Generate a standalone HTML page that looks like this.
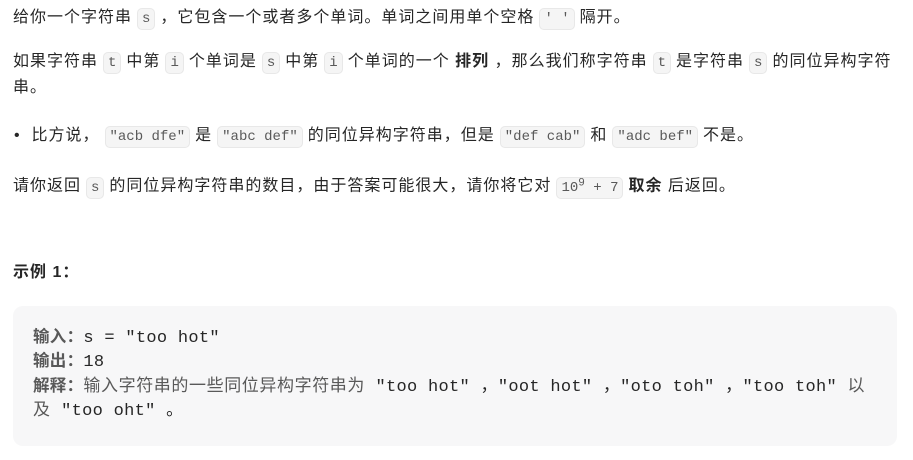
<!DOCTYPE html>
<html><head><meta charset="utf-8"><style>
body{margin:0;background:#fff;width:913px;height:460px;overflow:hidden;font-family:"Liberation Sans","Noto Sans CJK SC",sans-serif;font-size:16px;letter-spacing:1px;color:#262626;}
.l{position:absolute;left:13px;white-space:nowrap;line-height:24px;}
code{font-family:"Liberation Mono","Noto Sans CJK SC",monospace;font-size:14px;letter-spacing:0;color:#595959;background:#f5f5f5;border:1px solid #e8e8e8;border-radius:5px;padding:2px 4px;margin:0 5px;}
b{font-weight:bold;}
.pre{position:absolute;left:13px;top:306px;width:884px;height:140px;background:#f7f7f8;border-radius:10px;}
.p{position:absolute;left:33px;white-space:nowrap;font-family:"Liberation Mono","Noto Sans CJK SC",monospace;font-size:17px;letter-spacing:0.3px;color:#262626;line-height:24px;}
.p b{font-family:"Liberation Sans","Noto Sans CJK SC",sans-serif;font-size:16.5px;color:#595959;}
.p .c{font-family:"Liberation Sans","Noto Sans CJK SC",sans-serif;font-size:17px;letter-spacing:0.6px;color:#595959;}
</style></head><body>
<div class="l" style="top:6px">给你一个字符串<code>s</code>，它包含一个或者多个单词。单词之间用单个空格<code>' '</code>隔开。</div>
<div class="l" style="top:50px">如果字符串<code>t</code>中第<code>i</code>个单词是<code>s</code>中第<code>i</code>个单词的一个 <b>排列</b> ，那么我们称字符串<code>t</code>是字符串<code>s</code>的同位异构字符</div>
<div class="l" style="top:76px">串。</div>
<div class="l" style="top:124px;left:14px">•&nbsp;&nbsp;比方说，<code>"acb dfe"</code>是<code>"abc def"</code>的同位异构字符串，但是<code>"def cab"</code>和<code>"adc bef"</code>不是。</div>
<div class="l" style="top:171px">请你返回<code>s</code>的同位异构字符串的数目，由于答案可能很大，请你将它对<code>10<sup style="font-size:11px">9</sup> + 7</code><b>取余</b> 后返回。</div>
<div class="l" style="top:261px"><b>示例 1：</b></div>
<div class="pre"></div>
<div class="p" style="top:325px"><b>输入：</b>s = "too hot"</div>
<div class="p" style="top:349px"><b>输出：</b>18</div>
<div class="p" style="top:374px"><b>解释：</b><span class="c">输入字符串的一些同位异构字符串为</span> "too hot" ，"oot hot" ，"oto toh" ，"too toh" <span class="c">以</span></div>
<div class="p" style="top:398px"><span class="c">及</span> "too oht" 。</div>
</body></html>
